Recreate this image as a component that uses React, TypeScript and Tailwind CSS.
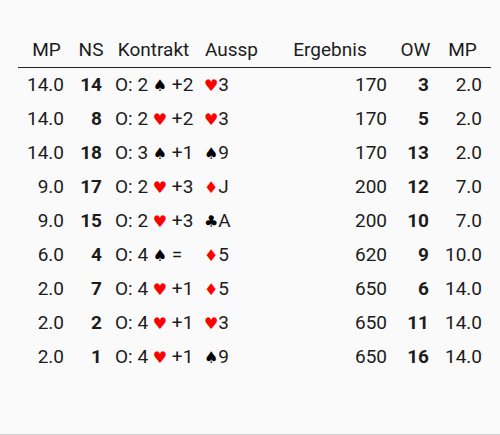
import React from 'react';

type Suit = 'S' | 'H' | 'D' | 'C';

interface Row {
  mpNs: string;
  ns: number;
  level: number;
  suit: Suit;
  result: string;
  leadSuit: Suit;
  leadCard: string;
  score: number;
  ow: number;
  mpOw: string;
}

const rows: Row[] = [
  { mpNs: '14.0', ns: 14, level: 2, suit: 'S', result: '+2', leadSuit: 'H', leadCard: '3', score: 170, ow: 3, mpOw: '2.0' },
  { mpNs: '14.0', ns: 8, level: 2, suit: 'H', result: '+2', leadSuit: 'H', leadCard: '3', score: 170, ow: 5, mpOw: '2.0' },
  { mpNs: '14.0', ns: 18, level: 3, suit: 'S', result: '+1', leadSuit: 'S', leadCard: '9', score: 170, ow: 13, mpOw: '2.0' },
  { mpNs: '9.0', ns: 17, level: 2, suit: 'H', result: '+3', leadSuit: 'D', leadCard: 'J', score: 200, ow: 12, mpOw: '7.0' },
  { mpNs: '9.0', ns: 15, level: 2, suit: 'H', result: '+3', leadSuit: 'C', leadCard: 'A', score: 200, ow: 10, mpOw: '7.0' },
  { mpNs: '6.0', ns: 4, level: 4, suit: 'S', result: '=', leadSuit: 'D', leadCard: '5', score: 620, ow: 9, mpOw: '10.0' },
  { mpNs: '2.0', ns: 7, level: 4, suit: 'H', result: '+1', leadSuit: 'D', leadCard: '5', score: 650, ow: 6, mpOw: '14.0' },
  { mpNs: '2.0', ns: 2, level: 4, suit: 'H', result: '+1', leadSuit: 'H', leadCard: '3', score: 650, ow: 11, mpOw: '14.0' },
  { mpNs: '2.0', ns: 1, level: 4, suit: 'H', result: '+1', leadSuit: 'S', leadCard: '9', score: 650, ow: 16, mpOw: '14.0' },
];

const suitChar: Record<Suit, string> = { S: '♠', H: '♥', D: '♦', C: '♣' };

const SuitIcon = ({ suit }: { suit: Suit }) => {
  const red = suit === 'H' || suit === 'D';
  return (
    <span className={`font-['DejaVu_Sans',sans-serif] text-[16px] ${red ? 'text-[#ff0000]' : 'text-black'}`}>
      {suitChar[suit]}
    </span>
  );
};

// header centred over each column, values right/left aligned
const cols = 'grid grid-cols-[57px_32px_93px_63px_134px_37px_57px]';

export default function App() {
  return (
    <div className="w-[500px] h-[435px] bg-[#fafafa] border-b border-[#d0d0d0] font-['Roboto',sans-serif] text-[19px] text-[#1c1c1c] overflow-hidden">
      <div className="pt-[33px] pl-[18px]">
        <div className={`${cols} w-[473px] h-[35px] items-center text-center border-b border-[#222]`}>
          <div>MP</div>
          <div>NS</div>
          <div>Kontrakt</div>
          <div>Aussp</div>
          <div>Ergebnis</div>
          <div>OW</div>
          <div>MP</div>
        </div>
        {rows.map((r, i) => (
          <div key={i} className={`${cols} w-[473px] h-[34px] items-center`}>
            <div className="text-right pr-[11px]">{r.mpNs}</div>
            <div className="text-right pr-[5px] font-bold">{r.ns}</div>
            <div className="pl-[8px] whitespace-nowrap">
              O: {r.level} <SuitIcon suit={r.suit} /> {r.result}
            </div>
            <div className="pl-[4px] whitespace-nowrap">
              <SuitIcon suit={r.leadSuit} />
              {r.leadCard}
            </div>
            <div className="text-right pr-[10px]">{r.score}</div>
            <div className="text-right pr-[5px] font-bold">{r.ow}</div>
            <div className="text-right pr-[9px]">{r.mpOw}</div>
          </div>
        ))}
      </div>
    </div>
  );
}
